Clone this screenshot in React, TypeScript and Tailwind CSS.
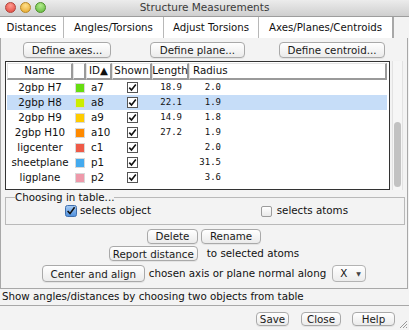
import React from 'react';

// Structure Measurements dialog - Axes/Planes/Centroids tab
type Row = { name: string; color: string; id: string; len: string; rad: string; sel?: boolean };

const rows: Row[] = [
  { name: '2gbp H7', color: '#66dd10', id: 'a7', len: '18.9', rad: '2.0' },
  { name: '2gbp H8', color: '#ccee00', id: 'a8', len: '22.1', rad: '1.9', sel: true },
  { name: '2gbp H9', color: '#ffcc00', id: 'a9', len: '14.9', rad: '1.8' },
  { name: '2gbp H10', color: '#ff8a00', id: 'a10', len: '27.2', rad: '1.9' },
  { name: 'ligcenter', color: '#ee5a48', id: 'c1', len: '', rad: '2.0' },
  { name: 'sheetplane', color: '#44aaee', id: 'p1', len: '', rad: '31.5' },
  { name: 'ligplane', color: '#ee99aa', id: 'p2', len: '', rad: '3.6' },
];

function Btn({ children, className = '' }: { children: React.ReactNode; className?: string }) {
  return (
    <div
      className={
        'flex items-center justify-center rounded-[4px] border border-[#a9a9a9] bg-linear-to-b from-white to-[#ebebeb] text-[10.3px] leading-none text-[#1a1a1a] shadow-[0_1px_0_rgba(0,0,0,0.06)] ' +
        className
      }
    >
      {children}
    </div>
  );
}

function Check({ on = true }: { on?: boolean }) {
  return (
    <svg width="11" height="11" viewBox="0 0 11 11">
      <rect x="0.5" y="0.5" width="10" height="10" fill="#fff" stroke="#555" />
      {on && <path d="M2.3 5.6 L4.5 8 L8.8 2.6" fill="none" stroke="#111" strokeWidth="1.6" />}
    </svg>
  );
}

function HeadCell({ children, className = '' }: { children?: React.ReactNode; className?: string }) {
  return (
    <div
      className={
        'flex h-full items-center border-t border-l border-t-[#e4e4e4] border-l-[#e4e4e4] border-r-2 border-b-2 border-r-[#9a9a9a] border-b-[#9a9a9a] bg-white text-[10.3px] text-[#111] ' +
        className
      }
    >
      {children}
    </div>
  );
}

export default function App() {
  return (
    <div className="flex h-[330px] w-[409px] flex-col overflow-hidden bg-[#f3f3f3] font-['DejaVu_Sans',sans-serif] text-[#111]">
      {/* title bar */}
      <div className="relative flex h-[17px] items-center justify-center border-b border-[#9d9d9d] bg-linear-to-b from-[#ececec] to-[#cfcfcf]">
        <div className="absolute left-[5px] top-[2px] flex gap-[4px]">
          <div className="h-[11px] w-[11px] rounded-full border border-[#b0443c] bg-[radial-gradient(circle_at_50%_30%,#ff9a8f,#e0443a)]" />
          <div className="h-[11px] w-[11px] rounded-full border border-[#b78724] bg-[radial-gradient(circle_at_50%_30%,#ffe08a,#e5a528)]" />
          <div className="h-[11px] w-[11px] rounded-full border border-[#4f8f2c] bg-[radial-gradient(circle_at_50%_30%,#b4ec8c,#5db53a)]" />
        </div>
        <span className="text-[10.5px] text-[#3a3a3a]">Structure Measurements</span>
      </div>

      {/* tabs */}
      <div className="flex h-[21px] text-[10.2px]">
        <div className="flex w-[64px] items-center justify-center border-r border-[#b8b8b8] bg-white">Distances</div>
        <div className="flex w-[100px] items-center justify-center border-r border-[#b8b8b8] bg-white">Angles/Torsions</div>
        <div className="flex w-[95px] items-center justify-center border-r border-[#b8b8b8] bg-white">Adjust Torsions</div>
        <div className="flex w-[135px] items-center justify-center border-r-2 border-[#a8a8a8] bg-white">Axes/Planes/Centroids</div>
        <div className="flex-1" />
      </div>

      {/* tab pane */}
      <div className="flex h-[251px] w-[408px] flex-col border-x border-b border-[#a8a8a8]">
        <div className="flex pt-[4px]">
          <Btn className="ml-[22px] h-[16px] w-[88px]">Define axes...</Btn>
          <Btn className="ml-[39px] h-[16px] w-[95px]">Define plane...</Btn>
          <Btn className="ml-[34px] h-[16px] w-[106px]">Define centroid...</Btn>
        </div>

        {/* table + scrollbar */}
        <div className="mt-[3px] flex h-[129px]">
          <div className="ml-[4px] flex h-full w-[385px] flex-col border border-[#333] bg-white pl-[1px] pr-[2px] pt-[1px]">
            <div className="flex h-[17px]">
              <HeadCell className="w-[66px] justify-center">Name</HeadCell>
              <HeadCell className="w-[13px]" />
              <HeadCell className="w-[26px] pl-[2px]">ID▲</HeadCell>
              <HeadCell className="w-[40px] justify-center">Shown</HeadCell>
              <HeadCell className="w-[37px] justify-center">Length</HeadCell>
              <HeadCell className="flex-1 pl-[3px]">Radius</HeadCell>
            </div>
            {rows.map((r) => (
              <div key={r.id} className={'flex h-[15px] items-center text-[10.3px] ' + (r.sel ? 'bg-[#c6ddf8]' : '')}>
                <div className="w-[66px] text-center">{r.name}</div>
                <div className="flex w-[13px] justify-center">
                  <div className="h-[10px] w-[10px] border border-[#d8d8d8]" style={{ backgroundColor: r.color }} />
                </div>
                <div className="w-[26px] pl-[5px]">{r.id}</div>
                <div className="flex w-[40px] justify-center">
                  <Check />
                </div>
                <div className="w-[37px] pr-[7px] text-right font-['DejaVu_Sans_Mono',monospace] text-[9px]">{r.len}</div>
                <div className="w-[32px] text-right font-['DejaVu_Sans_Mono',monospace] text-[9px]">{r.rad}</div>
              </div>
            ))}
          </div>
          <div className="ml-[2px] flex h-full w-[11px] flex-col border-x border-[#e2e2e2] bg-[#f6f6f6] px-[1px] pb-[3px]">
            <div className="flex-1" />
            <div className="h-[65px] rounded-full bg-[#c2c2c2]" />
          </div>
        </div>

        {/* choosing in table */}
        <fieldset className="ml-[4px] mt-[1px] h-[34px] w-[400px] border border-[#b9b9b9] px-[0px]">
          <legend className="ml-[9px] text-[10.3px] leading-[12px]">Choosing in table...</legend>
          <div className="flex h-[16px] items-center text-[10.3px]">
            <div className="ml-[59px] flex items-center gap-[3px]">
              <svg width="12" height="12" viewBox="0 0 12 12">
                <defs>
                  <linearGradient id="bl" x1="0" y1="0" x2="0" y2="1">
                    <stop offset="0" stopColor="#a9cdf5" />
                    <stop offset="1" stopColor="#4e8fdc" />
                  </linearGradient>
                </defs>
                <rect x="0.5" y="0.5" width="11" height="11" rx="2" fill="url(#bl)" stroke="#3f6fae" />
                <path d="M2.6 6 L5 8.6 L9.6 2.2" fill="none" stroke="#111" strokeWidth="1.6" />
              </svg>
              <span>selects object</span>
            </div>
            <div className="ml-auto mr-[56px] flex items-center gap-[5px]">
              <div className="h-[11px] w-[11px] rounded-[2px] border border-[#9c9c9c] bg-linear-to-b from-white to-[#e9e9e9]" />
              <span>selects atoms</span>
            </div>
          </div>
        </fieldset>

        <div className="mt-[4px] flex justify-center gap-[3px]">
          <Btn className="h-[15px] w-[51px]">Delete</Btn>
          <Btn className="h-[15px] w-[60px]">Rename</Btn>
        </div>
        <div className="mt-[2px] flex items-center justify-center text-[10.3px]">
          <Btn className="h-[15px] w-[89px]">Report distance</Btn>
          <span className="ml-[9px]">to selected atoms</span>
        </div>
        <div className="mt-[4px] flex items-center justify-center text-[10.3px]">
          <Btn className="h-[17px] w-[103px]">Center and align</Btn>
          <span className="ml-[4px]">chosen axis or plane normal along</span>
          <div className="ml-[6px] flex h-[17px] w-[34px] items-center rounded-[4px] border border-[#b3b3b3] bg-linear-to-b from-white to-[#ececec] pl-[7px]">
            <span>X</span>
            <span className="ml-[9px] text-[6px] text-[#444]">▼</span>
          </div>
        </div>
      </div>

      {/* status line */}
      <div className="flex h-[17px] items-center border-b border-[#a8a8a8] pl-[2px] text-[10.3px]">
        Show angles/distances by choosing two objects from table
      </div>

      {/* dialog buttons */}
      <div className="relative flex flex-1 items-start justify-end pr-[14px] pt-[6px]">
        <Btn className="h-[14px] w-[33px]">Save</Btn>
        <Btn className="ml-[12px] h-[14px] w-[40px]">Close</Btn>
        <Btn className="ml-[11px] h-[14px] w-[43px]">Help</Btn>
        <svg className="absolute bottom-[1px] right-[1px]" width="10" height="10" viewBox="0 0 10 10">
          <path d="M9 2 L2 9 M9 5 L5 9 M9 8 L8 9" stroke="#9a9a9a" strokeWidth="1" />
        </svg>
      </div>
    </div>
  );
}
